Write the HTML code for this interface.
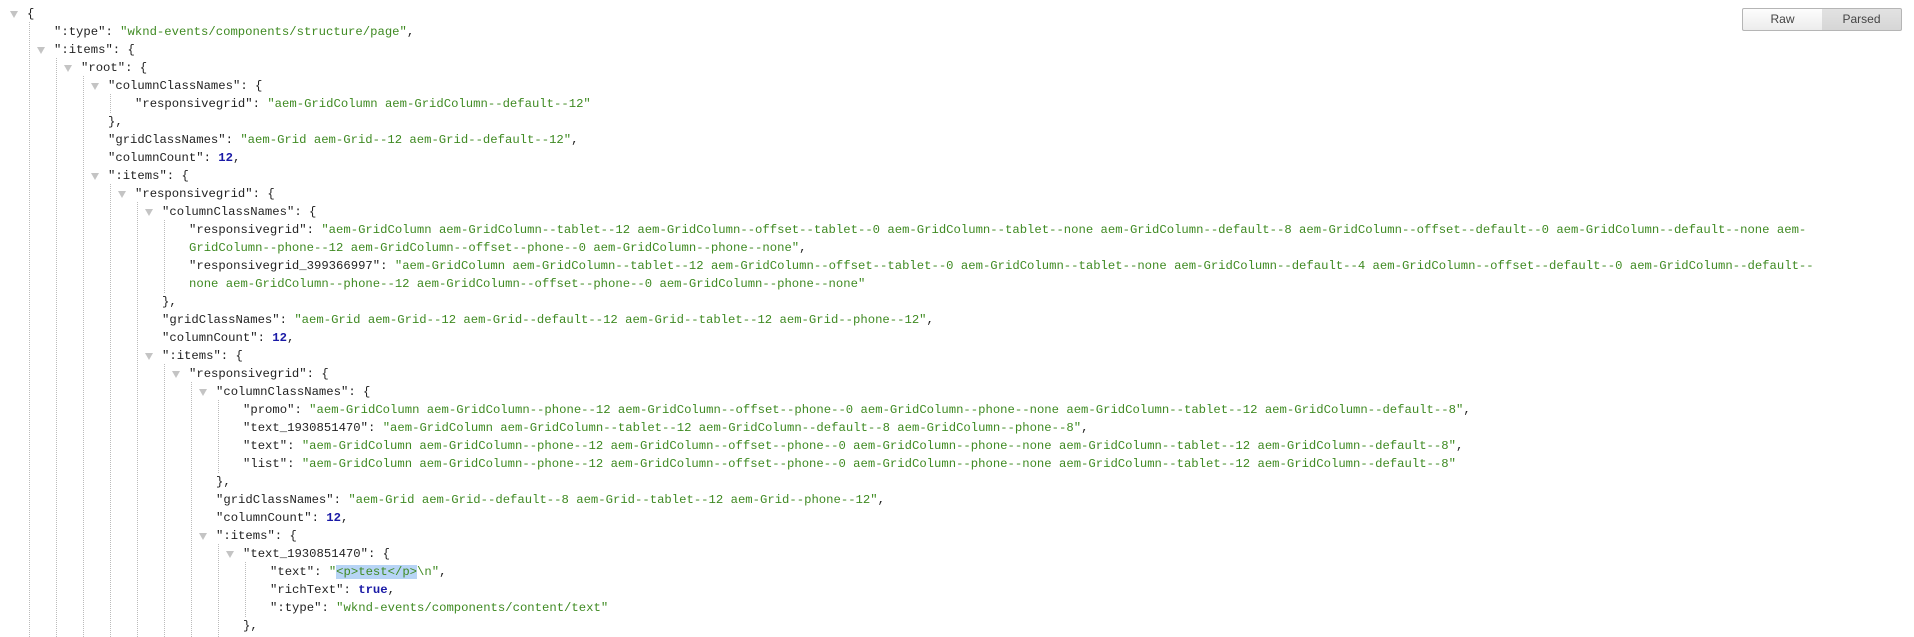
<!DOCTYPE html>
<html><head><meta charset="utf-8"><style>
body{margin:0;width:1914px;height:637px;background:#fff;overflow:hidden;position:relative;font-family:"Liberation Mono",monospace;font-size:12.25px;color:#222}
.r{position:absolute;height:18px;line-height:18px;white-space:pre}
.s{color:#3f8a22}
.n{color:#1a1aa6;font-weight:bold}
.t{position:absolute;width:0;height:0;border-left:4.5px solid transparent;border-right:4.5px solid transparent;border-top:7px solid #c4c4c4}
.v{position:absolute;width:0;border-left:1px dotted #bbb}
.hl{background:#b7d4f5}
.btn{position:absolute;top:8px;height:21px;border:1px solid #b5b5b5;font-family:"Liberation Sans",sans-serif;font-size:12px;color:#444;text-align:center;line-height:21px;box-sizing:content-box}
</style></head><body>
<div class="btn" style="left:1742px;width:79px;background:linear-gradient(#fdfdfd,#ececec);border-radius:2px 0 0 2px">Raw</div>
<div class="btn" style="left:1822px;width:79px;border-left:none;background:linear-gradient(#e2e2e2,#d6d6d6);border-radius:0 2px 2px 0">Parsed</div>
<div id="c"></div>
<script>
var rows=[
[0,1,'{'],
[1,0,'":type": <s>"wknd-events/components/structure/page"</s>,'],
[1,1,'":items": {'],
[2,1,'"root": {'],
[3,1,'"columnClassNames": {'],
[4,0,'"responsivegrid": <s>"aem-GridColumn aem-GridColumn--default--12"</s>'],
[3,0,'},'],
[3,0,'"gridClassNames": <s>"aem-Grid aem-Grid--12 aem-Grid--default--12"</s>,'],
[3,0,'"columnCount": <n>12</n>,'],
[3,1,'":items": {'],
[4,1,'"responsivegrid": {'],
[5,1,'"columnClassNames": {'],
[6,0,'"responsivegrid": <s>"aem-GridColumn aem-GridColumn--tablet--12 aem-GridColumn--offset--tablet--0 aem-GridColumn--tablet--none aem-GridColumn--default--8 aem-GridColumn--offset--default--0 aem-GridColumn--default--none aem-</s>'],
[6,0,'<s>GridColumn--phone--12 aem-GridColumn--offset--phone--0 aem-GridColumn--phone--none"</s>,'],
[6,0,'"responsivegrid_399366997": <s>"aem-GridColumn aem-GridColumn--tablet--12 aem-GridColumn--offset--tablet--0 aem-GridColumn--tablet--none aem-GridColumn--default--4 aem-GridColumn--offset--default--0 aem-GridColumn--default--</s>'],
[6,0,'<s>none aem-GridColumn--phone--12 aem-GridColumn--offset--phone--0 aem-GridColumn--phone--none"</s>'],
[5,0,'},'],
[5,0,'"gridClassNames": <s>"aem-Grid aem-Grid--12 aem-Grid--default--12 aem-Grid--tablet--12 aem-Grid--phone--12"</s>,'],
[5,0,'"columnCount": <n>12</n>,'],
[5,1,'":items": {'],
[6,1,'"responsivegrid": {'],
[7,1,'"columnClassNames": {'],
[8,0,'"promo": <s>"aem-GridColumn aem-GridColumn--phone--12 aem-GridColumn--offset--phone--0 aem-GridColumn--phone--none aem-GridColumn--tablet--12 aem-GridColumn--default--8"</s>,'],
[8,0,'"text_1930851470": <s>"aem-GridColumn aem-GridColumn--tablet--12 aem-GridColumn--default--8 aem-GridColumn--phone--8"</s>,'],
[8,0,'"text": <s>"aem-GridColumn aem-GridColumn--phone--12 aem-GridColumn--offset--phone--0 aem-GridColumn--phone--none aem-GridColumn--tablet--12 aem-GridColumn--default--8"</s>,'],
[8,0,'"list": <s>"aem-GridColumn aem-GridColumn--phone--12 aem-GridColumn--offset--phone--0 aem-GridColumn--phone--none aem-GridColumn--tablet--12 aem-GridColumn--default--8"</s>'],
[7,0,'},'],
[7,0,'"gridClassNames": <s>"aem-Grid aem-Grid--default--8 aem-Grid--tablet--12 aem-Grid--phone--12"</s>,'],
[7,0,'"columnCount": <n>12</n>,'],
[7,1,'":items": {'],
[8,1,'"text_1930851470": {'],
[9,0,'"text": <s>"<h>&lt;p&gt;test&lt;/p&gt;</h>\\n"</s>,'],
[9,0,'"richText": <n>true</n>,'],
[9,0,'":type": <s>"wknd-events/components/content/text"</s>'],
[8,0,'},']
];
var h='';
function X(l){return 27+27*l;}
function T(i){return 5+18*i;}
rows.forEach(function(r,i){
  var c=r[2].replace(/<s>/g,'<span class="s">').replace(/<\/s>/g,'</span>').replace(/<n>/g,'<span class="n">').replace(/<\/n>/g,'</span>').replace(/<h>/g,'<span class="hl">').replace(/<\/h>/g,'</span>');
  h+='<div class="r" style="left:'+X(r[0])+'px;top:'+T(i)+'px">'+c+'</div>';
  if(r[1])h+='<div class="t" style="left:'+(X(r[0])-17)+'px;top:'+(T(i)+6)+'px"></div>';
});
var v=[[0,0,99],[1,2,99],[2,3,99],[3,4,5],[3,9,99],[4,10,99],[5,11,15],[5,19,99],[6,20,99],[7,21,25],[7,29,99],[8,30,33]];
v.forEach(function(a){
  var top=T(a[1]+1)-1,bot=a[2]==99?637:T(a[2]+1);
  h+='<div class="v" style="left:'+(X(a[0])+2)+'px;top:'+top+'px;height:'+(bot-top)+'px"></div>';
});
document.getElementById('c').innerHTML=h;
</script>
</body></html>
